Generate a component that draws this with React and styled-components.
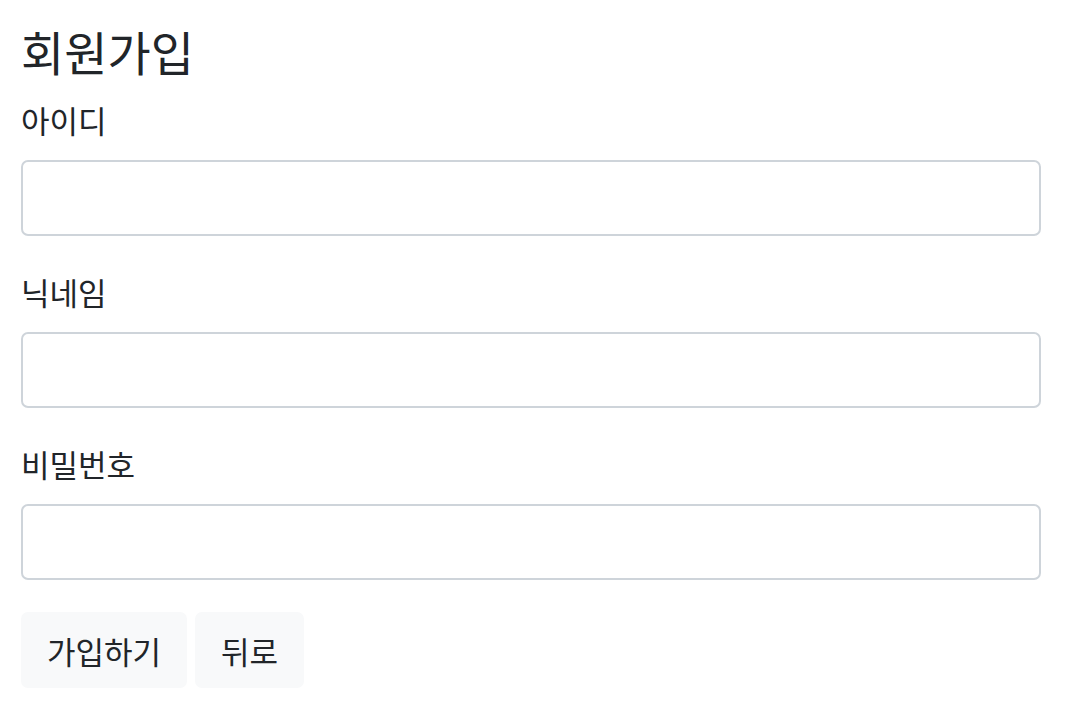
import React from 'react';
import styled, { createGlobalStyle } from 'styled-components';

const GlobalStyle = createGlobalStyle`
  body {
    margin: 0;
    background: #fff;
    color: #212529;
    font-family: 'Noto Sans CJK KR', 'Noto Sans', sans-serif;
  }
`

const Page = styled.div`
  padding: 23px 29px 0 21px;
`

const Title = styled.h4`
  margin: 0 0 18px;
  font-size: 47px;
  line-height: 56px;
  font-weight: 400;
`

const Field = styled.div`
  display: flex;
  flex-direction: column;
  margin-bottom: 33px;
`

const Label = styled.label`
  font-size: 31px;
  line-height: 46px;
  margin-bottom: 17px;
`

const Input = styled.input`
  box-sizing: border-box;
  width: 100%;
  height: 76px;
  border: 2px solid #ced4da;
  border-radius: 7px;
  padding: 0 21px;
  font-size: 31px;
  font-family: inherit;
  outline: none;
`

const Buttons = styled.div`
  display: flex;
  gap: 8px;
  margin-top: -1px;
`

const Button = styled.button`
  height: 76px;
  padding: 0 26px;
  border: none;
  border-radius: 7px;
  background: #f8f9fa;
  color: #212529;
  font-size: 31px;
  font-family: inherit;
  cursor: pointer;
`

const fields = ['아이디', '닉네임', '비밀번호']

const App = () => {
    return (
        <Page>
            <GlobalStyle />
            <Title>회원가입</Title>
            {fields.map(f => (
                <Field key={f}>
                    <Label>{f}</Label>
                    <Input type={f === '비밀번호' ? 'password' : 'text'} />
                </Field>
            ))}
            <Buttons>
                <Button>가입하기</Button>
                <Button>뒤로</Button>
            </Buttons>
        </Page>
    );
}

export default App
